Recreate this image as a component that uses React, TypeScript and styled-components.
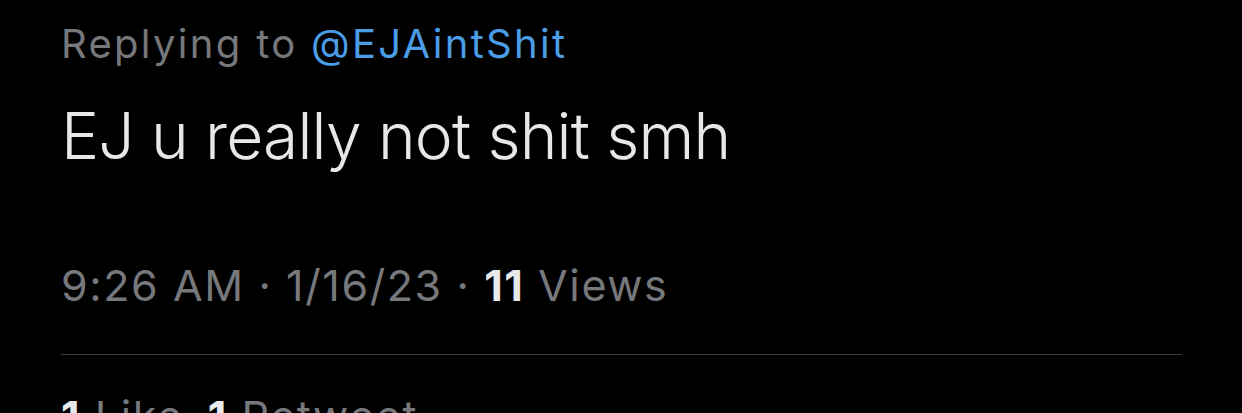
import * as React from 'react';
import styled, { createGlobalStyle } from 'styled-components';

const GlobalStyle = createGlobalStyle`
  html, body {
    margin: 0;
    padding: 0;
    background: #000;
  }
  body {
    font-family: Inter, 'Liberation Sans', sans-serif;
    -webkit-font-smoothing: antialiased;
  }
`;

const Page = styled.div`
  width: 1242px;
  height: 413px;
  overflow: hidden;
  background: #000;
  padding: 0 61px;
  box-sizing: border-box;
  display: flex;
  flex-direction: column;
`;

const ReplyLine = styled.div`
  margin-top: 20px;
  font-size: 40px;
  line-height: 48px;
  color: #76787c;
  letter-spacing: 2.3px;
  white-space: nowrap;
`;

const Handle = styled.span`
  color: #4a9de6;
`;

const Body = styled.div`
  margin-top: 30px;
  font-size: 64px;
  font-weight: 300;
  line-height: 76px;
  color: #e6e7e8;
  letter-spacing: -0.8px;
  white-space: nowrap;
`;

const Meta = styled.div`
  margin-top: 85px;
  font-size: 43px;
  line-height: 52px;
  color: #76787c;
  letter-spacing: 1.6px;
  white-space: nowrap;
`;

const Count = styled.span`
  color: #e7e9ea;
  font-weight: 700;
`;

const Divider = styled.hr`
  margin: 43px 0 0 0;
  border: none;
  border-top: 1px solid #3a3c3f;
  width: 1121px;
`;

const Stats = styled.div`
  margin-top: 35px;
  font-size: 43px;
  line-height: 52px;
  color: #76787c;
  letter-spacing: 1.6px;
  display: flex;
  gap: 24px;
  white-space: nowrap;
`;

export default function App() {
  return (
    <Page>
      <GlobalStyle />
      <ReplyLine>
        Replying to <Handle>@EJAintShit</Handle>
      </ReplyLine>
      <Body>EJ u really not shit smh</Body>
      <Meta>
        9:26 AM · 1/16/23 · <Count>11</Count> Views
      </Meta>
      <Divider />
      <Stats>
        <span>
          <Count>1</Count> Like
        </span>
        <span>
          <Count>1</Count> Retweet
        </span>
      </Stats>
    </Page>
  );
}
